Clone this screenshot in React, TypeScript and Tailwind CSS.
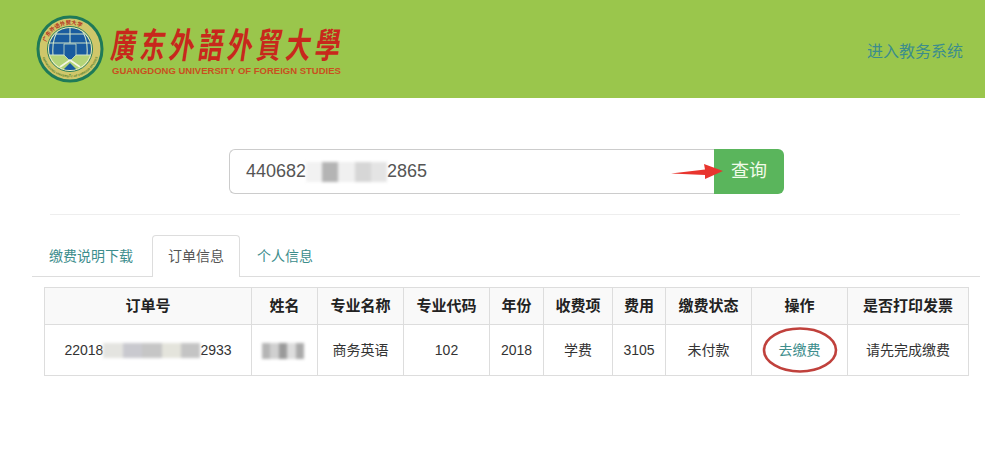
const columns = [
  { title: '订单号', width: 207 },
  { title: '姓名', width: 66 },
  { title: '专业名称', width: 86 },
  { title: '专业代码', width: 86 },
  { title: '年份', width: 54 },
  { title: '收费项', width: 69 },
  { title: '费用', width: 53 },
  { title: '缴费状态', width: 86 },
  { title: '操作', width: 96 },
  { title: '是否打印发票', width: 121 },
]

function SchoolLogo() {
  return (
    <svg width="68" height="68" viewBox="0 0 68 68" className="shrink-0">
      <defs>
        <path id="ring-top" d="M9.5 34a24.5 24.5 0 0 1 49 0" />
        <path id="ring-bottom" d="M6 41a29 29 0 0 0 56 0" />
        <clipPath id="globe">
          <circle cx="34" cy="34" r="21" />
        </clipPath>
      </defs>
      <circle cx="34" cy="34" r="32" fill="#cfc76a" stroke="#1f7a58" strokeWidth="3" />
      <circle cx="34" cy="34" r="22.5" fill="#eef0c4" stroke="#2a7d55" strokeWidth="1" />
      <g clipPath="url(#globe)">
        <rect x="10" y="10" width="48" height="48" fill="#b4d478" />
        <path d="M10 10h48v30H10z" fill="#1a5c9f" />
        <path d="M12 19h44M12 28h44M10 40h48" stroke="#cfe3c8" strokeWidth="1.1" fill="none" />
        <path d="M34 12v16M24 13c-6 7-8 15-7 27M44 13c6 7 8 15 7 27" stroke="#cfe3c8" strokeWidth="1.1" fill="none" />
        <path d="M28 29h12v11l-6 6-6-6z" fill="#1a5c9f" stroke="#cfe3c8" strokeWidth="0.8" />
        <path d="M24 52l10-7 10 7" fill="none" stroke="#f4f6e4" strokeWidth="1.8" />
        <path d="M24 58l10-10 10 10z" fill="#1a5c9f" />
      </g>
      <text fontSize="5.4" fontWeight="700" fill="#b5301f" fontFamily="'Noto Sans CJK SC', sans-serif">
        <textPath href="#ring-top" startOffset="9%">广东外语外贸大学</textPath>
      </text>
      <text fontSize="3" fontWeight="700" fill="#4f7d2c" fontFamily="'Liberation Sans', sans-serif">
        <textPath href="#ring-bottom" startOffset="2%">GUANGDONG UNIVERSITY OF FOREIGN STUDIES</textPath>
      </text>
    </svg>
  )
}

function Blurred({ width, height, shades }: { width: string; height: string; shades: string[] }) {
  return (
    <span className={`inline-flex overflow-hidden blur-[1.5px] ${width} ${height}`}>
      {shades.map((shade, idx) => (
        <span key={idx} className="h-full flex-1" style={{ backgroundColor: shade }} />
      ))}
    </span>
  )
}

export default function App() {
  return (
    <div className="min-h-[453px] bg-white text-[14px] text-[#333] font-['Liberation_Sans','Noto_Sans_CJK_SC',sans-serif]">
      <header className="flex h-[98px] items-center justify-between bg-[#9ac64c] pl-[36px] pr-[22px]">
        <div className="flex items-center gap-[8px]">
          <SchoolLogo />
          <div className="w-[229px]">
            <div className="flex h-[40px] origin-center -skew-x-12 scale-y-[1.4] items-center justify-between text-[25px] leading-none font-bold text-[#c8281c] font-['Noto_Sans_CJK_SC',serif]">
              <span>廣</span>
              <span>东</span>
              <span>外</span>
              <span>語</span>
              <span>外</span>
              <span>貿</span>
              <span>大</span>
              <span>學</span>
            </div>
            <div className="mt-[3px] text-[9.5px] leading-[10px] font-bold whitespace-nowrap text-[#c9501f]">GUANGDONG UNIVERSITY OF FOREIGN STUDIES</div>
          </div>
        </div>
        <a className="mt-[5px] text-[16px] text-[#3c8d8c]">进入教务系统</a>
      </header>

      <div className="mt-[51px] ml-[229px] flex h-[45px] w-[555px]">
        <div className="flex flex-1 items-center rounded-l-[6px] border border-r-0 border-[#ccc] pl-[16px] text-[18px] text-[#555]">
          440682
          <Blurred width="w-[81px]" height="h-[20px]" shades={['#f2f2f2', '#b4b4b4', '#f0f0f0', '#d6d6d6', '#e4e4e4']} />
          2865
        </div>
        <button className="relative w-[70px] rounded-r-[6px] bg-[#5ab55c] text-[18px] text-[#f1fbe9]">
          查询
          <svg width="56" height="18" viewBox="0 0 56 18" className="absolute top-[13px] left-[-43px]">
            <path d="M0 11.5 34 7.5 33 2 52 9 34 17 34 13z" fill="#e8352e" />
          </svg>
        </button>
      </div>

      <div className="mt-[20px] ml-[50px] h-px w-[910px] bg-[#eeeeee]" />

      <div className="mt-[20px] ml-[32px] flex h-[42px] w-[948px] border-b border-[#ddd] pl-[18px]">
        <a className="-ml-px w-[103px] pt-[11px] text-[#3c8d8c]">缴费说明下载</a>
        <a className="h-[42px] w-[88px] rounded-t-[4px] border border-b-0 border-[#ddd] bg-white pt-[10px] text-center text-[#555]">订单信息</a>
        <a className="w-[90px] pt-[11px] text-center text-[#3c8d8c]">个人信息</a>
      </div>

      <table className="mt-[10px] ml-[44px] w-[924px] table-fixed border-collapse border border-[#ddd] text-center">
        <colgroup>
          {columns.map((col) => (
            <col key={col.title} style={{ width: col.width }} />
          ))}
        </colgroup>
        <thead>
          <tr className="h-[37px] bg-[#f9f9f9]">
            {columns.map((col) => (
              <th key={col.title} className="border border-[#ddd] p-0 text-[15px] font-bold text-[#222]">{col.title}</th>
            ))}
          </tr>
        </thead>
        <tbody>
          <tr className="h-[51px]">
            <td className="border border-[#ddd] p-0">
              <span className="inline-flex items-center align-middle">
                22018
                <Blurred width="w-[97px]" height="h-[15px]" shades={['#e4e4e0', '#c9c9cf', '#c6c6c6', '#e4e4dc', '#c4c4c4']} />
                2933
              </span>
            </td>
            <td className="border border-[#ddd] p-0">
              <span className="mr-[3px] inline-flex align-middle">
                <Blurred width="w-[43px]" height="h-[16px]" shades={['#b5b5b5', '#d0d0d0', '#9a9a9a', '#dddddd', '#aaaaaa']} />
              </span>
            </td>
            <td className="border border-[#ddd] p-0">商务英语</td>
            <td className="border border-[#ddd] p-0">102</td>
            <td className="border border-[#ddd] p-0">2018</td>
            <td className="border border-[#ddd] p-0">学费</td>
            <td className="border border-[#ddd] p-0">3105</td>
            <td className="border border-[#ddd] p-0">未付款</td>
            <td className="relative border border-[#ddd] p-0 text-[#3c8d8c]">
              去缴费
              <svg width="76" height="48" viewBox="0 0 76 48" className="absolute top-[1px] left-[10px]">
                <ellipse cx="38" cy="24" rx="36" ry="21.5" fill="none" stroke="#c0413c" strokeWidth="2.6" />
              </svg>
            </td>
            <td className="border border-[#ddd] p-0">请先完成缴费</td>
          </tr>
        </tbody>
      </table>
    </div>
  )
}
